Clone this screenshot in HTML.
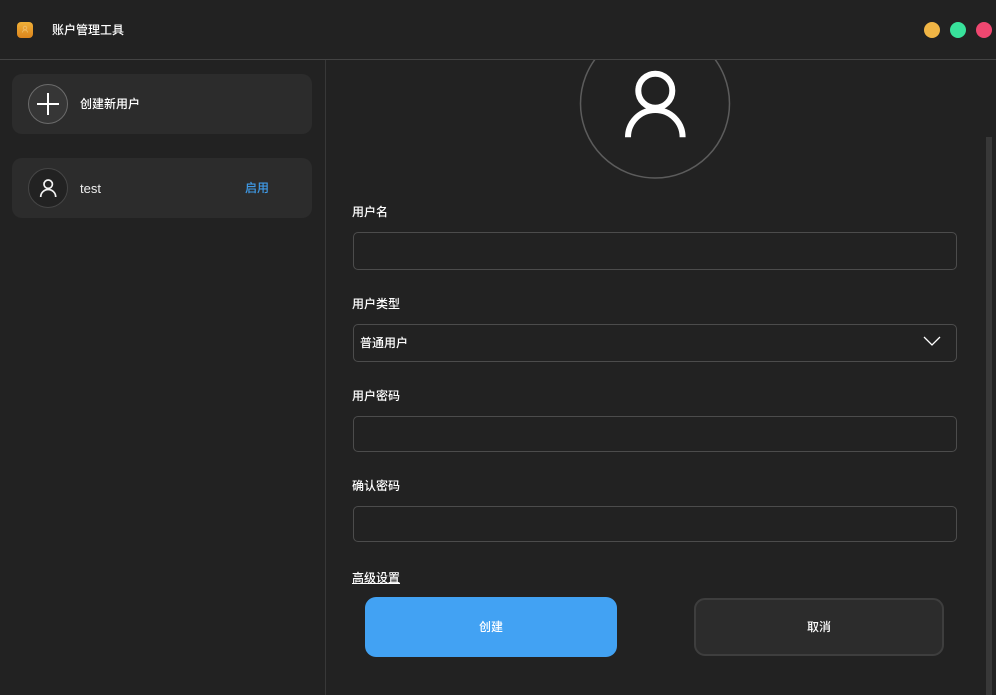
<!DOCTYPE html>
<html lang="zh"><head><meta charset="utf-8"><title>账户管理工具</title>
<style>
html,body{margin:0;padding:0;background:#222;width:996px;height:695px;overflow:hidden}
body{position:relative;font-family:"Liberation Sans","Noto Sans CJK SC",sans-serif;color:#fff;font-size:12px;font-weight:500}
.a{position:absolute}
.t{position:absolute;line-height:16px;white-space:nowrap}
.card{position:absolute;left:12px;width:300px;height:60px;background:#2c2c2c;border-radius:10px}
.inp{position:absolute;left:353px;width:602px;background:#222;border:1px solid #4c4c4c;border-radius:5px}
.dot{position:absolute;top:22px;width:16px;height:16px;border-radius:50%}
.btn{position:absolute;text-align:center;box-sizing:border-box}
</style></head><body>
<div class="a" style="left:0;top:59px;width:996px;height:1px;background:#434343"></div>
<div class="a" style="left:325px;top:60px;width:1px;height:635px;background:#383838"></div>

<div class="a" style="left:17px;top:22px;width:16px;height:16px;border-radius:4px;background:linear-gradient(#f0b038,#dd851c)"></div>
<svg class="a" style="left:17px;top:22px" width="16" height="16" viewBox="0 0 16 16" fill="none" stroke="#f0c070" stroke-width="0.800"><circle cx="8" cy="6" r="1.800"/><path d="M5.500 10.500a2.500 2.500 0 0 1 5 0"/></svg>
<div class="t" style="left:52px;top:22px">账户管理工具</div>
<div class="dot" style="left:924px;background:#f0b545"></div>
<div class="dot" style="left:950px;background:#38e29b"></div>
<div class="dot" style="left:976px;background:#ef4770"></div>

<div class="card" style="top:74px"></div>
<div class="a" style="left:28px;top:84px;width:38px;height:38px;border:1px solid #6b6b6b;border-radius:50%;background:#363636"></div>
<div class="a" style="left:37px;top:103px;width:22px;height:2px;background:#fff"></div>
<div class="a" style="left:47px;top:93px;width:2px;height:22px;background:#fff"></div>
<div class="t" style="left:80px;top:96px">创建新用户</div>

<div class="card" style="top:158px"></div>
<div class="a" style="left:28px;top:168px;width:38px;height:38px;border:1px solid #464646;border-radius:50%;background:#222"></div>
<svg class="a" style="left:38px;top:178px" width="20" height="20" viewBox="0 0 20 20" fill="none" stroke="#f2f2f2" stroke-width="1.700"><circle cx="10.200" cy="6.200" r="4.200"/><path d="M2.700 19A7.500 7.500 0 0 1 17.700 19"/></svg>
<div class="t" style="left:80px;top:181px;color:#eee;font-size:13px">test</div>
<div class="t" style="left:245px;top:180px;color:#3f9be8">启用</div>

<svg class="a" style="left:326px;top:60px" width="660" height="125" viewBox="326 60 660 125" fill="none">
<circle cx="655" cy="103.500" r="74.500" stroke="#5c5c5c" stroke-width="1.500"/>
<circle cx="655.300" cy="90.700" r="17" stroke="#fff" stroke-width="6"/>
<path d="M628 137.300A27.300 27.300 0 0 1 682.600 137.300" stroke="#fff" stroke-width="6"/>
</svg>

<div class="t" style="left:352px;top:204px">用户名</div>
<div class="inp" style="top:232px;height:36px"></div>
<div class="t" style="left:352px;top:296px">用户类型</div>
<div class="inp" style="top:324px;height:36px"></div>
<div class="t" style="left:360px;top:335px">普通用户</div>
<svg class="a" style="left:922px;top:335px" width="20" height="14" viewBox="0 0 20 14" fill="none" stroke="#fff" stroke-width="1.300"><path d="M2 2l8 8 8-8"/></svg>
<div class="t" style="left:352px;top:388px">用户密码</div>
<div class="inp" style="top:416px;height:34px"></div>
<div class="t" style="left:352px;top:478px">确认密码</div>
<div class="inp" style="top:506px;height:34px"></div>
<div class="t" style="left:352px;top:570px;text-decoration:underline">高级设置</div>

<div class="btn" style="left:365px;top:597px;width:252px;height:60px;background:#42a2f3;border-radius:11px;line-height:60px">创建</div>
<div class="btn" style="left:694px;top:598px;width:250px;height:58px;background:#2c2c2c;border:2px solid #3e3e3e;border-radius:11px;line-height:54px">取消</div>

<div class="a" style="left:986px;top:137px;width:6px;height:558px;background:#383838"></div>
</body></html>
